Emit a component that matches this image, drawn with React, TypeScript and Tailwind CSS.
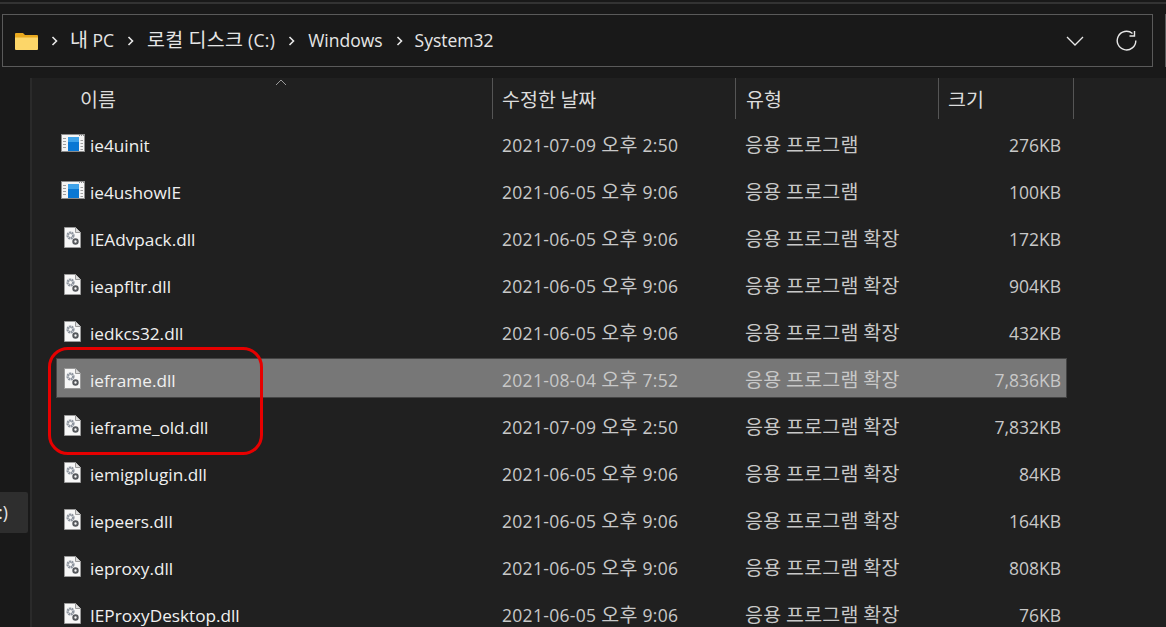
import React from 'react';

const FONT = "font-['Open_Sans','Noto_Sans_CJK_KR',sans-serif]";

interface FileRow {
  name: string;
  date: string;
  type: string;
  size: string;
  kind: 'exe' | 'dll';
  selected?: boolean;
}

const rows: FileRow[] = [
  { name: 'ie4uinit', date: '2021-07-09 오후 2:50', type: '응용 프로그램', size: '276KB', kind: 'exe' },
  { name: 'ie4ushowIE', date: '2021-06-05 오후 9:06', type: '응용 프로그램', size: '100KB', kind: 'exe' },
  { name: 'IEAdvpack.dll', date: '2021-06-05 오후 9:06', type: '응용 프로그램 확장', size: '172KB', kind: 'dll' },
  { name: 'ieapfltr.dll', date: '2021-06-05 오후 9:06', type: '응용 프로그램 확장', size: '904KB', kind: 'dll' },
  { name: 'iedkcs32.dll', date: '2021-06-05 오후 9:06', type: '응용 프로그램 확장', size: '432KB', kind: 'dll' },
  { name: 'ieframe.dll', date: '2021-08-04 오후 7:52', type: '응용 프로그램 확장', size: '7,836KB', kind: 'dll', selected: true },
  { name: 'ieframe_old.dll', date: '2021-07-09 오후 2:50', type: '응용 프로그램 확장', size: '7,832KB', kind: 'dll' },
  { name: 'iemigplugin.dll', date: '2021-06-05 오후 9:06', type: '응용 프로그램 확장', size: '84KB', kind: 'dll' },
  { name: 'iepeers.dll', date: '2021-06-05 오후 9:06', type: '응용 프로그램 확장', size: '164KB', kind: 'dll' },
  { name: 'ieproxy.dll', date: '2021-06-05 오후 9:06', type: '응용 프로그램 확장', size: '808KB', kind: 'dll' },
  { name: 'IEProxyDesktop.dll', date: '2021-06-05 오후 9:06', type: '응용 프로그램 확장', size: '76KB', kind: 'dll' },
];

// hangul runs sit larger than the latin text, like Malgun Gothic does
const Ko = ({ text }: { text: string }) => (
  <>
    {text.split(/([\uAC00-\uD7A3]+)/).map((part, i) =>
      i % 2 === 1 ? (
        <span key={i} className="text-[19.5px] leading-none">{part}</span>
      ) : (
        <span key={i}>{part}</span>
      )
    )}
  </>
);

const ExeIcon = () => (
  <svg width="24" height="18" viewBox="0 0 24 18">
    <rect x="0.5" y="0.5" width="23" height="17" fill="#f4f4f4" stroke="#8c8c8c" />
    <rect x="7" y="3" width="11" height="14" fill="#0a78d4" />
    <rect x="7" y="3" width="11" height="5" fill="#3fa3ea" />
    <path d="M2 4.5h3M2 7.5h3M2 10.5h3M2 13.5h3M19.5 6.5h2.5M19.5 9.5h2.5M19.5 12.5h2.5M19.5 15.5h2.5" stroke="#9e9e9e" />
    <path d="M18 1.5h1M20 1.5h1M22 1.5h1" stroke="#8c8c8c" />
  </svg>
);

const DllIcon = () => (
  <svg width="17" height="21" viewBox="0 0 17 21">
    <path d="M0.5 0.5H11.5L16.5 5.5V20.5H0.5Z" fill="#f7f7f7" stroke="#9a9a9a" />
    <path d="M11.5 0.5V5.5H16.5" fill="#dcdcdc" stroke="#9a9a9a" />
    <circle cx="6.5" cy="8.5" r="2.8" fill="none" stroke="#8f96a0" strokeWidth="2.6" strokeDasharray="1.8 0.5" />
    <circle cx="11.5" cy="14.5" r="2.2" fill="none" stroke="#55585c" strokeWidth="2" />
  </svg>
);

const Chevron = () => (
  <svg width="7" height="10" viewBox="0 0 7 10" className="mx-[13px]">
    <path d="M1.5 1l4 4-4 4" fill="none" stroke="#e8e8e8" strokeWidth="1.6" />
  </svg>
);

export default function App() {
  return (
    <div className={`${FONT} relative h-[627px] w-[1166px] overflow-hidden bg-[#191919] text-[17.5px] text-[#e6e6e6]`}>
      <div className="mt-[2px] h-[2px] w-full bg-[#333333]" />

      {/* address bar */}
      <div className="flex h-[74px] items-start pl-[2px] pt-[10px]">
        <div className="flex h-[53px] w-[1151px] shrink-0 items-center border border-[#5a5a5a] pl-[12px]">
          <svg width="23" height="18" viewBox="0 0 23 18">
            <path d="M0 2a1 1 0 0 1 1-1h7l2 2h12a1 1 0 0 1 1 1v13H0Z" fill="#e9a91f" />
            <path d="M0 5.5h23V17a1 1 0 0 1-1 1H1a1 1 0 0 1-1-1Z" fill="#fcd669" />
          </svg>
          <Chevron />
          <span className="-ml-[1px]"><Ko text="내 PC" /></span>
          <Chevron />
          <span className="tracking-[0.3px]"><Ko text="로컬 디스크 (C:)" /></span>
          <Chevron />
          <span>Windows</span>
          <Chevron />
          <span className="-ml-[1px]">System32</span>
          <div className="ml-auto flex items-center gap-[32px] pr-[15px]">
            <svg width="18" height="10" viewBox="0 0 18 10">
              <path d="M1 1l8 8 8-8" fill="none" stroke="#e8e8e8" strokeWidth="1.3" />
            </svg>
            <svg width="21" height="21" viewBox="0 0 21 21">
              <path d="M16.5 3.5A9.3 9.3 0 1 0 19.8 10.5" fill="none" stroke="#e8e8e8" strokeWidth="1.4" />
              <path d="M18.5 1v5h-5" fill="none" stroke="#e8e8e8" strokeWidth="1.4" />
            </svg>
          </div>
        </div>
        {/* next box, mostly off the edge */}
        <div className="ml-[12px] h-[53px] w-[20px] shrink-0 border border-[#5a5a5a]" />
      </div>

      <div className="flex h-[549px]">
        {/* nav pane, scrolled sideways */}
        <div className="w-[30px] shrink-0 pt-[414px]">
          <div className="flex h-[41px] w-[28px] items-center justify-end rounded-r-[2px] bg-[#2e2e2e] pr-[20px]">
            <span>:)</span>
          </div>
        </div>

        {/* file list */}
        <div className="flex-1 border-l-2 border-[#2a2a2a] bg-[#202020]">
          <div className="relative flex h-[41px] text-[#dcdcdc]">
            <svg width="12" height="7" viewBox="0 0 12 7" className="absolute left-[243px] top-[1px]">
              <path d="M1 6l5-5 5 5" fill="none" stroke="#9a9a9a" />
            </svg>
            <div className="w-[461px] border-r border-[#555555] pl-[48px] pt-[9px]"><Ko text="이름" /></div>
            <div className="w-[243px] border-r border-[#555555] pl-[9px] pt-[9px]"><Ko text="수정한 날짜" /></div>
            <div className="w-[203px] border-r border-[#555555] pl-[10px] pt-[9px]"><Ko text="유형" /></div>
            <div className="w-[135px] border-r border-[#555555] pl-[9px] pt-[9px]"><Ko text="크기" /></div>
          </div>

          <div className="pl-[24px] pt-[4px]">
            {rows.map((row) => (
              <div
                key={row.name}
                className={`mb-[7px] flex h-[40px] w-[1011px] items-center border pt-[5px] ${
                  row.selected ? 'border-[#444444] bg-[#777777]' : 'border-transparent'
                }`}
              >
                <div className="flex w-[436px] items-center">
                  {row.kind === 'exe' ? (
                    <span className="mb-[5px] ml-[4px] flex w-[29px]"><ExeIcon /></span>
                  ) : (
                    <span className="mb-[5px] ml-[7px] flex w-[26px]"><DllIcon /></span>
                  )}
                  <span className="text-[17.2px] text-[#f0f0f0]">{row.name}</span>
                </div>
                <div className="w-[244px] pl-[9px] tracking-[0.3px] text-[#c8c8c8]"><Ko text={row.date} /></div>
                <div className="w-[227px] pl-[8px] tracking-[0.2px] text-[#c8c8c8]"><Ko text={row.type} /></div>
                <div className="w-[97px] text-right text-[#c8c8c8]">{row.size}</div>
              </div>
            ))}
          </div>
        </div>
      </div>

      {/* red annotation */}
      <div className="absolute left-[48px] top-[347px] h-[108px] w-[215px] rounded-[20px] border-[3px] border-[#e60000]" />
    </div>
  );
}
